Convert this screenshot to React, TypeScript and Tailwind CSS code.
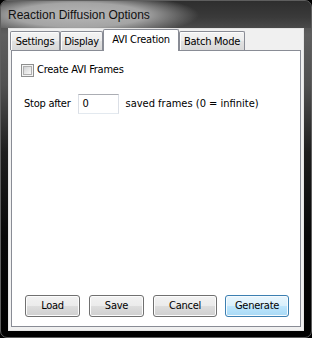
import React from "react";

const ui = "font-['DejaVu_Sans_Condensed','DejaVu_Sans',sans-serif] text-[11px] tracking-[-0.25px] text-black";

function Tab({ label, w, selected }: { label: string; w: string; selected?: boolean }) {
  if (selected) {
    return (
      <div
        className={`${w} h-[22px] -mb-[1px] relative z-10 bg-white border border-b-0 border-[#898c95] rounded-t-[2px] flex items-start justify-center pt-[2px] ${ui}`}
      >
        {label}
      </div>
    );
  }
  return (
    <div
      className={`${w} h-[19px] border border-b-0 border-[#898c95] rounded-t-[2px] bg-[linear-gradient(to_bottom,#f4f4f4_0%,#ececec_50%,#e2e2e2_51%,#d8d8d8_100%)] shadow-[inset_1px_1px_0_#fcfcfc] flex items-center justify-center pt-[2px] ${ui}`}
    >
      {label}
    </div>
  );
}

function Btn({ label, w, def }: { label: string; w: string; def?: boolean }) {
  const skin = def
    ? "border-[#3c7fb1] bg-[linear-gradient(to_bottom,#eaf6fd_0%,#d9f0fc_50%,#bee6fd_51%,#a7d9f5_100%)] shadow-[inset_0_0_0_1px_#f6fbfe]"
    : "border-[#707070] bg-[linear-gradient(to_bottom,#f2f2f2_0%,#ebebeb_50%,#dddddd_51%,#cfcfcf_100%)] shadow-[inset_0_0_0_1px_#fcfcfc]";
  return (
    <div className={`${w} h-[22px] border rounded-[3px] ${skin} flex items-center justify-center ${ui}`}>
      {label}
    </div>
  );
}

export default function App() {
  return (
    <div className="w-[312px] h-[338px] bg-black">
      <div className="w-[312px] h-[338px] rounded-[7px] border border-[#5e5e5e] bg-[linear-gradient(to_bottom,#3a3a3a_0%,#5e5e5e_10%,#505050_25%,#1e1e1e_45%,#080808_70%,#000000_100%)] flex flex-col overflow-hidden">
        <div className="h-[27px] shrink-0 flex items-center pl-[7px] pt-[1px] bg-[radial-gradient(ellipse_120px_22px_at_78px_14px,#b6b6b6_0%,#a4a4a4_55%,rgba(50,50,50,0)_100%),linear-gradient(to_bottom,#2e2e2e_0%,#3a3a3a_60%,#4a4a4a_100%)]">
          <span className="font-['Liberation_Sans',Arial,sans-serif] text-[12px] text-[#111] leading-none">
            Reaction Diffusion Options
          </span>
        </div>
        <div className="mx-[7px] mb-[6px] flex-1 border border-[#e4e4e4] bg-[#f0f0f0] flex flex-col">
          <div className="h-[21px] shrink-0 flex items-end pl-[1px]">
            <Tab label="Settings" w="w-[50px]" />
            <Tab label="Display" w="w-[43px]" />
            <Tab label="AVI Creation" w="w-[76px]" selected />
            <Tab label="Batch Mode" w="w-[66px]" />
          </div>
          <div className="ml-[2px] mr-[2px] mb-[3px] flex-1 border border-[#898c95] bg-white flex flex-col">
            <div className="flex items-center mt-[13px] ml-[9px] h-[13px]">
              <div className="w-[13px] h-[13px] border border-[#8e8f8f] bg-[#f4f4f4] p-[1px] flex">
                <div className="flex-1 border border-[#b0b0b0] bg-[linear-gradient(135deg,#cfd1d4_0%,#e6e6e6_50%,#f8f8f8_100%)]" />
              </div>
              <span className={`ml-[3px] ${ui}`}>Create AVI Frames</span>
            </div>
            <div className="flex items-center mt-[17px] ml-[12px] h-[20px]">
              <span className={ui}>Stop after</span>
              <div className={`ml-[7px] w-[41px] h-[20px] border border-[#abadb3] border-l-[#dbdfe6] border-r-[#dbdfe6] border-b-[#e3e9ef] bg-white flex items-center pl-[4px] ${ui}`}>
                0
              </div>
              <span className={`ml-[7px] tracking-[0px] ${ui}`}>saved frames (0 = infinite)</span>
            </div>
            <div className="flex-1" />
            <div className="flex items-center ml-[13px] mb-[9px]">
              <Btn label="Load" w="w-[55px]" />
              <div className="w-[9px]" />
              <Btn label="Save" w="w-[55px]" />
              <div className="w-[9px]" />
              <Btn label="Cancel" w="w-[64px]" />
              <div className="w-[8px]" />
              <Btn label="Generate" w="w-[64px]" def />
            </div>
          </div>
        </div>
      </div>
    </div>
  );
}
